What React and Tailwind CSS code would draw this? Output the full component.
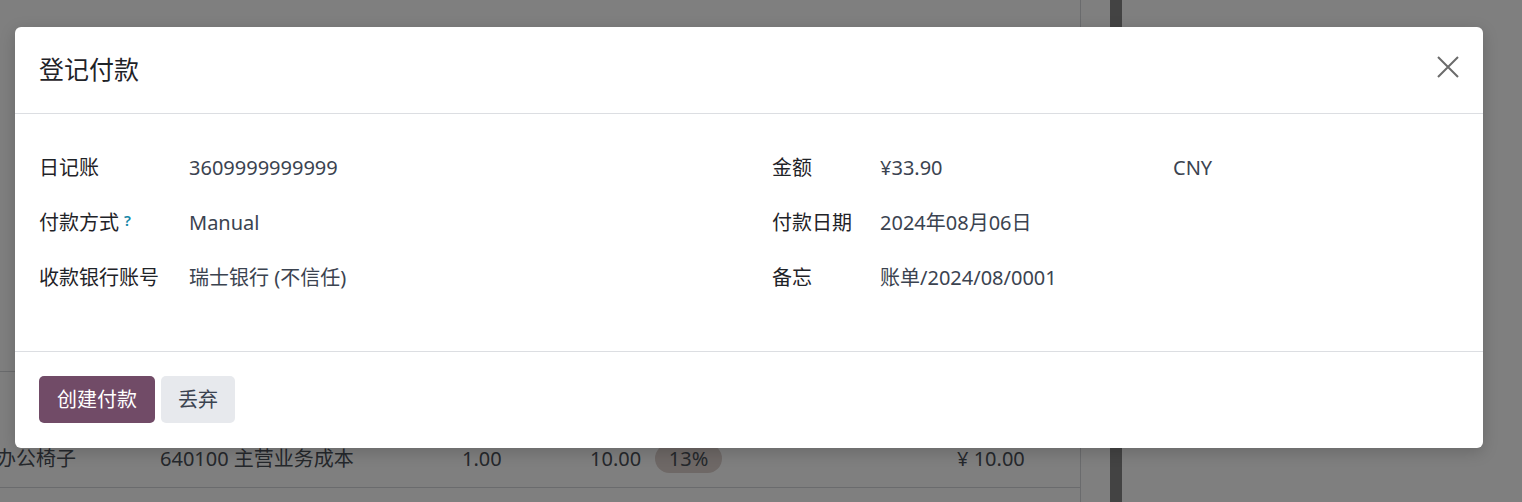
import React from 'react';

const Field = ({ label, help, labelWidth, children }) => (
  <div className="flex h-[55px] items-center">
    <div className="shrink-0 text-[#1f2328]" style={{ width: labelWidth }}>
      {label}
      {help && <sup className="ml-[5px] text-[15px] font-semibold text-[#1487a8] relative -top-[4px]">?</sup>}
    </div>
    <div className="flex-1 text-[#3b4350]">{children}</div>
  </div>
);

const RegisterPaymentDialog = () => (
  <div className="absolute left-[15px] top-[27px] w-[1468px] h-[421px] bg-white rounded-[6px] shadow-[0_4px_16px_rgba(0,0,0,0.18)] flex flex-col">
    {/* Header */}
    <div className="h-[87px] px-[24px] flex items-center justify-between border-b border-[#dcdee2]">
      <h4 className="text-[25px] text-[#1f2328] leading-none -mt-[2px]">登记付款</h4>
      <button className="w-[22px] h-[22px] flex items-center justify-center text-[#6b6b6b] -mt-[6px]">
        <svg className="w-[22px] h-[22px]" viewBox="0 0 22 22" fill="none" stroke="currentColor" strokeWidth={2}>
          <path d="M1 1L21 21M21 1L1 21" />
        </svg>
      </button>
    </div>

    {/* Body */}
    <div className="h-[237px] px-[24px] pt-[26px] flex text-[20px]">
      <div className="w-[733px]">
        <Field label="日记账" labelWidth={150}>3609999999999</Field>
        <Field label="付款方式" help labelWidth={150}>Manual</Field>
        <Field label="收款银行账号" labelWidth={150}>瑞士银行 (不信任)</Field>
      </div>
      <div className="flex-1">
        <Field label="金额" labelWidth={108}>
          <div className="flex">
            <span className="w-[293px]">¥33.90</span>
            <span>CNY</span>
          </div>
        </Field>
        <Field label="付款日期" labelWidth={108}>2024年08月06日</Field>
        <Field label="备忘" labelWidth={108}>账单/2024/08/0001</Field>
      </div>
    </div>

    {/* Footer */}
    <div className="flex-1 border-t border-[#dcdee2] px-[24px] pt-[24px] flex gap-[6px] items-start">
      <button className="h-[47px] px-[18px] rounded-[5px] bg-[#714b67] text-white text-[20px]">创建付款</button>
      <button className="h-[47px] px-[17px] rounded-[5px] bg-[#e7e9ed] text-[#3b4350] text-[20px]">丢弃</button>
    </div>
  </div>
);

export default function App() {
  return (
    <div
      className="relative w-[1522px] h-[502px] overflow-hidden bg-white"
      style={{ fontFamily: '"Noto Sans", "Noto Sans CJK SC", sans-serif' }}
    >
      {/* Page behind the dialog */}
      <div className="flex h-full">
        <div className="w-[1081px] border-r border-[#d4d6da] text-[20px] text-[#4b5058] overflow-hidden">
          <div className="h-[372px] border-b border-[#d4d6da]" />
          <div className="h-[58px]" />
          <div className="h-[58px] border-b border-[#d4d6da] flex items-center -ml-[4px]">
            <span className="w-[164px] shrink-0">办公椅子</span>
            <span className="w-[302px] shrink-0">640100 主营业务成本</span>
            <span className="w-[128px] shrink-0">1.00</span>
            <span className="w-[65px] shrink-0">10.00</span>
            <span className="w-[67px] h-[29px] shrink-0 rounded-full bg-[#dcd0cc] flex items-center justify-center">13%</span>
            <span className="ml-[235px] shrink-0">¥ 10.00</span>
          </div>
        </div>
        <div className="w-[29px]" />
        <div className="w-[12px] bg-[#878787]" />
        <div className="flex-1" />
      </div>

      {/* Backdrop */}
      <div className="absolute inset-0 bg-black/50" />

      <RegisterPaymentDialog />
    </div>
  );
}
